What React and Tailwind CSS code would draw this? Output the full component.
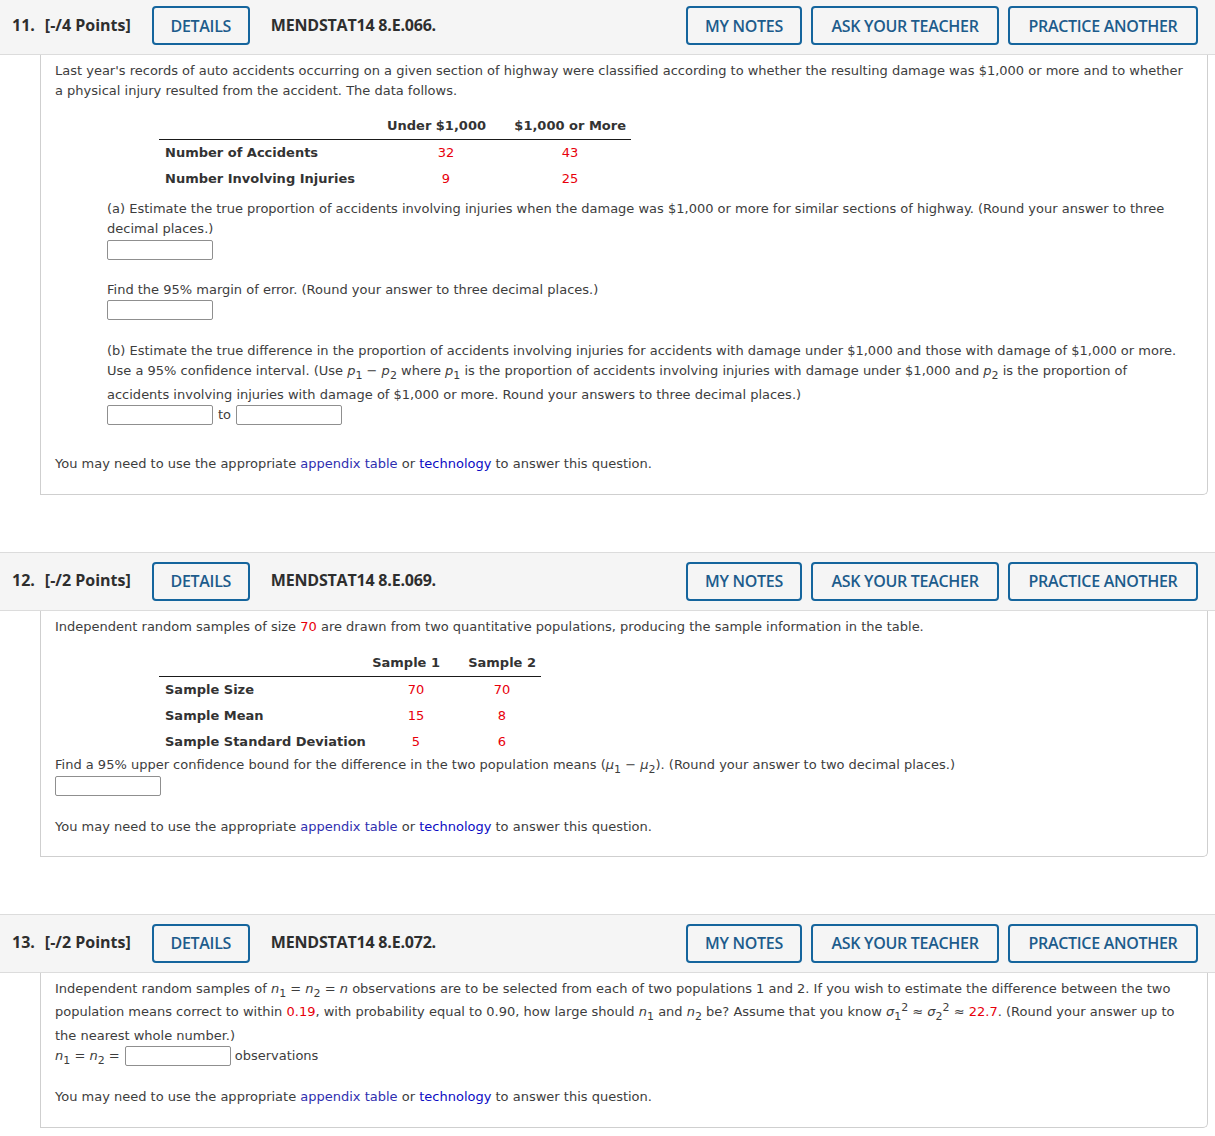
import React from 'react';

const body = "font-['DejaVu_Sans','Verdana',sans-serif] text-[13px] leading-[20px] text-[#3d3d3d]";

function Sub({ children, tight }) {
  return <span className={`align-sub text-[11px] ${tight ? 'leading-none' : 'leading-[18px]'}`}>{children}</span>;
}

function Sup({ children }) {
  return <span className="align-super text-[11px] leading-[12px]">{children}</span>;
}

function Red({ children }) {
  return <span className="text-[#e8000b]">{children}</span>;
}

function Box({ className = '' }) {
  return (
    <span className={`inline-block h-[20px] w-[106px] rounded-[2px] border border-[#8f8f8f] bg-white align-middle ${className}`} />
  );
}

function Header({ num, points, code, first }) {
  const btn =
    "flex h-[39px] items-center justify-center rounded-[4px] border-2 border-[#15659d] bg-transparent text-[16px] text-[#1d5c8c] font-semibold tracking-[-0.3px]";
  return (
    <div
      className={`flex h-[59px] items-center border-y border-[#dcdcdc] bg-[#f5f5f5] pl-[12px] pr-[17px] font-['Open_Sans',sans-serif] text-[#2e2e2e] ${
        first ? '-mt-[4px]' : 'mt-[57px]'
      }`}
    >
      <span className="-mt-[2px] text-[16px] font-bold">{num}.</span>
      <span className="-mt-[2px] ml-[10px] text-[16px] font-bold">[-/{points} Points]</span>
      <button className={`${btn} ml-[21px] w-[98px]`}>DETAILS</button>
      <span className="-mt-[2px] ml-[21px] text-[16px] font-bold tracking-[-0.2px]">{code}</span>
      <div className="ml-auto flex gap-[9px]">
        <button className={`${btn} w-[116px]`}>MY NOTES</button>
        <button className={`${btn} w-[188px]`}>ASK YOUR TEACHER</button>
        <button className={`${btn} w-[190px]`}>PRACTICE ANOTHER</button>
      </div>
    </div>
  );
}

function DataTable({ width, cols, rows, className = '' }) {
  return (
    <div className={className} style={{ width }}>
      <div className="flex h-[27px] items-center border-b border-[#1a1a1a] font-bold text-[#333]">
        <div style={{ width: cols[0].w }} />
        {cols.slice(1).map((c) => (
          <div key={c.label} className="text-right" style={{ width: c.w, paddingRight: c.hr }}>
            {c.label}
          </div>
        ))}
      </div>
      {rows.map((r) => (
        <div key={r[0]} className="flex h-[26px] items-center">
          <div className="pl-[6px] font-bold text-[#333]" style={{ width: cols[0].w }}>
            {r[0]}
          </div>
          {r.slice(1).map((v, i) => (
            <div key={i} className="text-center text-[#e8000b]" style={{ width: cols[i + 1].w, paddingLeft: cols[i + 1].vl }}>
              {v}
            </div>
          ))}
        </div>
      ))}
    </div>
  );
}

function Help({ className = '' }) {
  return (
    <p className={className}>
      You may need to use the appropriate <span className="text-[#2f2fb0]">appendix table</span> or{' '}
      <span className="text-[#0b0bc4]">technology</span> to answer this question.
    </p>
  );
}

function Content({ children, pb = 'pb-[20px]' }) {
  return (
    <div className={`ml-[40px] w-[1168px] rounded-br-[5px] border-x border-b border-[#cfcfcf] px-[14px] pt-[6px] ${pb} ${body}`}>
      {children}
    </div>
  );
}

export default function App() {
  return (
    <div className="min-h-screen overflow-hidden bg-white pb-[8px]">
      <Header num="11" points="4" code="MENDSTAT14 8.E.066." first />
      <Content>
        <p className="whitespace-nowrap">
          Last year's records of auto accidents occurring on a given section of highway were classified according to whether the resulting damage was $1,000 or more and to whether
          <br />
          a physical injury resulted from the accident. The data follows.
        </p>
        <DataTable
          className="mt-[12px] ml-[104px]"
          width={472}
          cols={[
            { w: 219 },
            { w: 118, label: 'Under $1,000', hr: 10, vl: 18 },
            { w: 135, label: '$1,000 or More', hr: 5, vl: 13 },
          ]}
          rows={[
            ['Number of Accidents', '32', '43'],
            ['Number Involving Injuries', '9', '25'],
          ]}
        />
        <div className="mt-[7px] ml-[52px]">
          <p className="whitespace-nowrap">
            (a) Estimate the true proportion of accidents involving injuries when the damage was $1,000 or more for similar sections of highway. (Round your answer to three
            <br />
            decimal places.)
          </p>
          <div className="mt-[1px] flex">
            <Box />
          </div>
          <p className="mt-[20px]">Find the 95% margin of error. (Round your answer to three decimal places.)</p>
          <div className="flex">
            <Box />
          </div>
          <p className="mt-[21px] whitespace-nowrap">
            (b) Estimate the true difference in the proportion of accidents involving injuries for accidents with damage under $1,000 and those with damage of $1,000 or more.
            <br />
            Use a 95% confidence interval. (Use <i>p</i>
            <Sub>1</Sub> − <i>p</i>
            <Sub>2</Sub> where <i>p</i>
            <Sub>1</Sub> is the proportion of accidents involving injuries with damage under $1,000 and <i>p</i>
            <Sub>2</Sub> is the proportion of
            <br />
            accidents involving injuries with damage of $1,000 or more. Round your answers to three decimal places.)
          </p>
          <div className="flex items-center">
            <Box />
            <span className="mx-[5px]">to</span>
            <Box />
          </div>
        </div>
        <Help className="mt-[29px]" />
      </Content>

      <Header num="12" points="2" code="MENDSTAT14 8.E.069." />
      <Content pb="pb-[19px]">
        <p>
          Independent random samples of size <Red>70</Red> are drawn from two quantitative populations, producing the sample information in the table.
        </p>
        <DataTable
          className="mt-[13px] ml-[104px]"
          width={382}
          cols={[
            { w: 209 },
            { w: 82, label: 'Sample 1', hr: 10, vl: 14 },
            { w: 91, label: 'Sample 2', hr: 5, vl: 13 },
          ]}
          rows={[
            ['Sample Size', '70', '70'],
            ['Sample Mean', '15', '8'],
            ['Sample Standard Deviation', '5', '6'],
          ]}
        />
        <p className="whitespace-nowrap">
          Find a 95% upper confidence bound for the difference in the two population means (<i>μ</i>
          <Sub tight>1</Sub> − <i>μ</i>
          <Sub tight>2</Sub>). (Round your answer to two decimal places.)
        </p>
        <div className="mt-[1px] flex">
          <Box />
        </div>
        <Help className="mt-[21px]" />
      </Content>

      <Header num="13" points="2" code="MENDSTAT14 8.E.072." />
      <Content>
        <p className="whitespace-nowrap">
          Independent random samples of <i>n</i>
          <Sub>1</Sub> = <i>n</i>
          <Sub>2</Sub> = <i>n</i> observations are to be selected from each of two populations 1 and 2. If you wish to estimate the difference between the two
          <br />
          population means correct to within <Red>0.19</Red>, with probability equal to 0.90, how large should <i>n</i>
          <Sub>1</Sub> and <i>n</i>
          <Sub>2</Sub> be? Assume that you know <i>σ</i>
          <Sub>1</Sub>
          <Sup>2</Sup> ≈ <i>σ</i>
          <Sub>2</Sub>
          <Sup>2</Sup> ≈ <Red>22.7</Red>. (Round your answer up to
          <br />
          the nearest whole number.)
        </p>
        <div className="flex h-[20px] items-center">
          <span>
            <i>n</i>
            <Sub tight>1</Sub> = <i>n</i>
            <Sub tight>2</Sub> =
          </span>
          <Box className="ml-[5px]" />
          <span className="ml-[4px]">observations</span>
        </div>
        <Help className="mt-[21px]" />
      </Content>
    </div>
  );
}
